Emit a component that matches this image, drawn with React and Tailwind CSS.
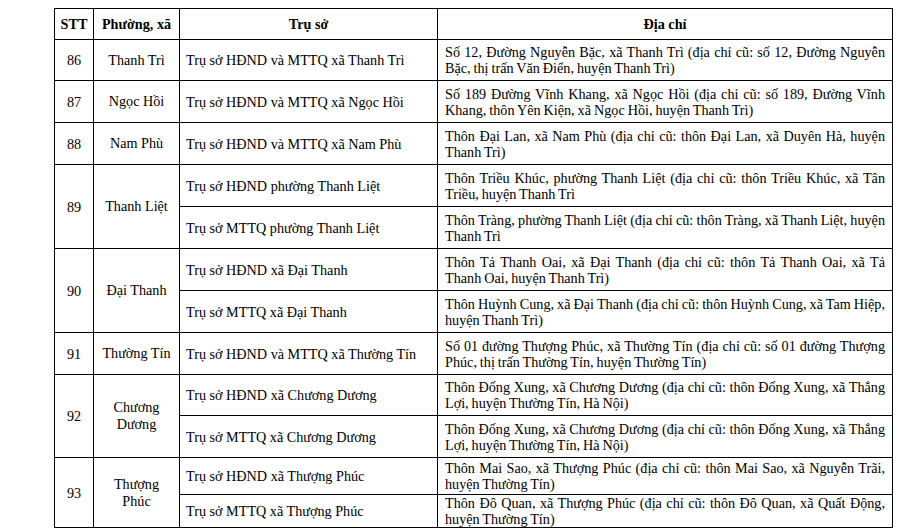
import React from "react";

const rows = [
  { stt: "86", ward: ["Thanh Trì"], items: [
    ["Trụ sở HĐND và MTTQ xã Thanh Trì", "Số 12, Đường Nguyễn Bặc, xã Thanh Trì (địa chỉ cũ: số 12, Đường Nguyễn Bặc, thị trấn Văn Điển, huyện Thanh Trì)", "h-[41px]"],
  ]},
  { stt: "87", ward: ["Ngọc Hồi"], items: [
    ["Trụ sở HĐND và MTTQ xã Ngọc Hồi", "Số 189 Đường Vĩnh Khang, xã Ngọc Hồi (địa chỉ cũ: số 189, Đường Vĩnh Khang, thôn Yên Kiện, xã Ngọc Hồi, huyện Thanh Trì)", "h-[42px]"],
  ]},
  { stt: "88", ward: ["Nam Phù"], items: [
    ["Trụ sở HĐND và MTTQ xã Nam Phù", "Thôn Đại Lan, xã Nam Phù (địa chỉ cũ: thôn Đại Lan, xã Duyên Hà, huyện Thanh Trì)", "h-[42px]"],
  ]},
  { stt: "89", ward: ["Thanh Liệt"], items: [
    ["Trụ sở HĐND phường Thanh Liệt", "Thôn Triều Khúc, phường Thanh Liệt (địa chỉ cũ: thôn Triều Khúc, xã Tân Triều, huyện Thanh Trì", "h-[42px]"],
    ["Trụ sở MTTQ phường Thanh Liệt", "Thôn Tràng, phường Thanh Liệt (địa chỉ cũ: thôn Tràng, xã Thanh Liệt, huyện Thanh Trì", "h-[42px]"],
  ]},
  { stt: "90", ward: ["Đại Thanh"], items: [
    ["Trụ sở HĐND xã Đại Thanh", "Thôn Tả Thanh Oai, xã Đại Thanh (địa chỉ cũ: thôn Tả Thanh Oai, xã Tả Thanh Oai, huyện Thanh Trì)", "h-[42px]"],
    ["Trụ sở MTTQ xã Đại Thanh", "Thôn Huỳnh Cung, xã Đại Thanh (địa chỉ cũ: thôn Huỳnh Cung, xã Tam Hiệp, huyện Thanh Trì)", "h-[42px]"],
  ]},
  { stt: "91", ward: ["Thường Tín"], items: [
    ["Trụ sở HĐND và MTTQ xã Thường Tín", "Số 01 đường Thượng Phúc, xã Thường Tín (địa chỉ cũ: số 01 đường Thượng Phúc, thị trấn Thường Tín, huyện Thường Tín)", "h-[42px]"],
  ]},
  { stt: "92", ward: ["Chương", "Dương"], items: [
    ["Trụ sở HĐND xã Chương Dương", "Thôn Đống Xung, xã Chương Dương (địa chỉ cũ: thôn Đống Xung, xã Thắng Lợi, huyện Thường Tín, Hà Nội)", "h-[41px]"],
    ["Trụ sở MTTQ xã Chương Dương", "Thôn Đống Xung, xã Chương Dương (địa chỉ cũ: thôn Đống Xung, xã Thắng Lợi, huyện Thường Tín, Hà Nội)", "h-[42px]"],
  ]},
  { stt: "93", ward: ["Thượng", "Phúc"], items: [
    ["Trụ sở HĐND xã Thượng Phúc", "Thôn Mai Sao, xã Thượng Phúc (địa chỉ cũ: thôn Mai Sao, xã Nguyễn Trãi, huyện Thường Tín)", "h-[37px]"],
    ["Trụ sở MTTQ xã Thượng Phúc", "Thôn Đô Quan, xã Thượng Phúc (địa chỉ cũ: thôn Đô Quan, xã Quất Động, huyện Thường Tín)", "h-[33px]"],
  ]},
];

const cell = "border border-black align-middle p-0";

export default function App() {
  return (
    <div className="w-[923px] h-[530px] bg-white overflow-hidden pt-[8px] pl-[54px] font-['Liberation_Serif',serif] text-black text-[14.2px] leading-[16px]">
      <table className="border-collapse table-fixed w-[838px]">
        <colgroup>
          <col className="w-[39px]" />
          <col className="w-[86px]" />
          <col className="w-[258px]" />
          <col className="w-[455px]" />
        </colgroup>
        <thead>
          <tr className="h-[31px] font-bold">
            <th className={cell + " text-center"}>STT</th>
            <th className={cell + " text-center"}>Phường, xã</th>
            <th className={cell + " text-center"}>Trụ sở</th>
            <th className={cell + " text-center"}>Địa chỉ</th>
          </tr>
        </thead>
        <tbody>
          {rows.map((r) =>
            r.items.map((it, i) => (
              <tr key={r.stt + "-" + i} className={it[2]}>
                {i === 0 && (
                  <td rowSpan={r.items.length} className={cell + " text-center"}>{r.stt}</td>
                )}
                {i === 0 && (
                  <td rowSpan={r.items.length} className={cell + " text-center leading-[17px]"}>
                    {r.ward.map((w, k) => (
                      <div key={k}>{w}</div>
                    ))}
                  </td>
                )}
                <td className={cell + " pl-[6px] pr-[4px]"}>{it[0]}</td>
                <td className={cell + " pl-[7px] pr-[7px] text-justify [word-spacing:-0.6px]"}>{it[1]}</td>
              </tr>
            ))
          )}
        </tbody>
      </table>
    </div>
  );
}
